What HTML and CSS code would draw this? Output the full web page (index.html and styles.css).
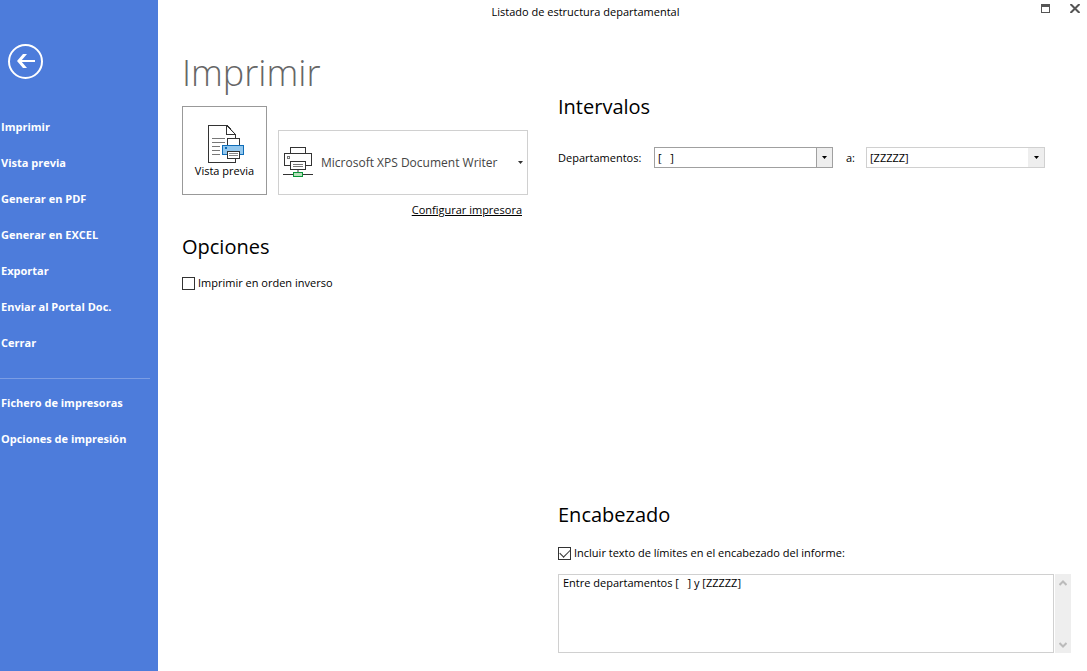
FILE: index.html
```html
<!DOCTYPE html>
<html lang="es">
<head>
<meta charset="utf-8">
<meta name="viewport" content="width=device-width, initial-scale=1">
<title>Listado de estructura departamental</title>
<link rel="stylesheet" href="styles.css">
</head>
<body>
<div class="app">
  <aside class="sidebar">
    <button class="back" type="button" aria-label="Volver">
      <svg width="36" height="36" viewBox="0 0 36 36" fill="none" stroke="#fff">
        <circle cx="17.5" cy="17.5" r="16.5" stroke-width="2"/>
        <path d="M11 17H27" stroke-width="2"/>
        <path d="M9 17L15 10H19L13 17L19 24H15Z" fill="#fff" stroke="none"/>
      </svg>
    </button>
    <nav class="menu">
      <a class="menu-item" href="#imprimir">Imprimir</a>
      <a class="menu-item" href="#vista">Vista previa</a>
      <a class="menu-item" href="#pdf">Generar en PDF</a>
      <a class="menu-item" href="#excel">Generar en EXCEL</a>
      <a class="menu-item" href="#exportar">Exportar</a>
      <a class="menu-item" href="#portal">Enviar al Portal Doc.</a>
      <a class="menu-item" href="#cerrar">Cerrar</a>
    </nav>
    <nav class="menu menu-extra">
      <a class="menu-item" href="#fichero">Fichero de impresoras</a>
      <a class="menu-item" href="#opciones">Opciones de impresión</a>
    </nav>
  </aside>

  <div class="window">
    <header class="titlebar">
      <div class="window-title">Listado de estructura departamental</div>
      <div class="window-controls">
        <button class="window-button" type="button" aria-label="Maximizar">
          <svg width="9" height="9" viewBox="0 0 9 9" shape-rendering="crispEdges"><path d="M0 0H9V9H0ZM1 3V8H8V3Z" fill="#555" fill-rule="evenodd"/></svg>
        </button>
        <button class="window-button" type="button" aria-label="Cerrar ventana">
          <svg width="10" height="9" viewBox="0 0 10 9"><path d="M0.5 0L9.5 9M9.5 0L0.5 9" stroke="#555" stroke-width="2"/></svg>
        </button>
      </div>
    </header>

    <main class="content">
      <div class="column-print">
        <h1 class="page-title">Imprimir</h1>
        <div class="print-row">
          <button class="preview" type="button">
            <svg width="36" height="38" viewBox="0 0 36 38" fill="none" shape-rendering="crispEdges">
              <path d="M.5 .5H19L27.5 9.5V37.5H.5Z" fill="#fff" stroke="#333"/>
              <path d="M18.500 .5V9.5H27.5" stroke="#333"/>
              <path d="M19 .5L27.5 9.5" stroke="#333" shape-rendering="auto"/>
              <path d="M4 13.5H17M4 17.5H17M4 21.5H12M4 25.5H12M4 29.5H12" stroke="#777"/>
              <path d="M19.5 20V13.5H31.5V20" fill="#fff" stroke="#333"/>
              <path d="M14.500 20.500H35.500V29.500H14.500Z" fill="#92c7ee" stroke="#0f6db8"/>
              <path d="M17 22H19V24H17Z" fill="#0f6db8"/>
              <path d="M19.500 26.500H31.500V33.500H19.500Z" fill="#fff" stroke="#333"/>
              <path d="M21 28.500H30M21 30.500H30" stroke="#888"/>
            </svg>
            <span>Vista previa</span>
          </button>
          <div class="printer">
            <svg class="printer-icon" width="30" height="31" viewBox="0 0 30 31" fill="none" shape-rendering="crispEdges">
              <path d="M7.500 7V.500H22.500V7" fill="#fff" stroke="#333"/>
              <path d="M1.500 6.500H28.500V18.500H1.500Z" fill="#fff" stroke="#333"/>
              <path d="M4.500 9.500H6.500V11.500H4.500Z" stroke="#777"/>
              <path d="M7.500 14.500H22.500V22.500H7.500Z" fill="#fff" stroke="#333"/>
              <path d="M10 17.500H20M10 19.500H20" stroke="#777"/>
              <path d="M15 23V25" stroke="#999" stroke-width="2"/>
              <path d="M0 27.500H30" stroke="#333"/>
              <path d="M10.500 25.500H19.500V29.500H10.500Z" fill="#b9e0bd" stroke="#0a9638"/>
            </svg>
            <select class="printer-select" aria-label="Impresora"><option>Microsoft XPS Document Writer</option></select>
            <svg class="printer-arrow" width="5" height="3" viewBox="0 0 5 3"><path d="M0 0H5L2.500 3Z" fill="#333"/></svg>
          </div>
        </div>
        <a class="configure" href="#configurar">Configurar impresora</a>
        <h2 class="section-title">Opciones</h2>
        <label class="check-row"><input class="check" type="checkbox"> Imprimir en orden inverso</label>
      </div>

      <div class="column-range">
        <h2 class="section-title">Intervalos</h2>
        <div class="range">
          <label class="range-label" for="desde">Departamentos:</label>
          <div class="combo combo-active">
            <select class="combo-select" id="desde"><option>[&nbsp;&nbsp;&nbsp;]</option></select>
            <span class="combo-arrow"><svg width="5" height="3" viewBox="0 0 5 3"><path d="M0 0H5L2.500 3Z"/></svg></span>
          </div>
          <label class="range-to" for="hasta">a:</label>
          <div class="combo">
            <select class="combo-select" id="hasta"><option>[ZZZZZ]</option></select>
            <span class="combo-arrow"><svg width="5" height="3" viewBox="0 0 5 3"><path d="M0 0H5L2.500 3Z"/></svg></span>
          </div>
        </div>
        <section class="heading-section">
          <h2 class="section-title">Encabezado</h2>
          <label class="check-row"><input class="check" type="checkbox" checked> Incluir texto de límites en el encabezado del informe:</label>
          <div class="memo">
            <textarea class="memo-text" aria-label="Texto del encabezado">Entre departamentos [&nbsp;&nbsp;&nbsp;] y [ZZZZZ]</textarea>
            <div class="scroll">
              <button class="scroll-button" type="button" aria-label="Subir"><svg width="8" height="6" viewBox="0 0 8 6"><path d="M.5 5L4 1.500L7.500 5" fill="none" stroke="#bbb" stroke-width="2"/></svg></button>
              <button class="scroll-button" type="button" aria-label="Bajar"><svg width="8" height="6" viewBox="0 0 8 6"><path d="M.5 1L4 4.500L7.500 1" fill="none" stroke="#bbb" stroke-width="2"/></svg></button>
            </div>
          </div>
        </section>
      </div>
    </main>
  </div>
</div>
</body>
</html>
```

FILE: styles.css
```css
* { box-sizing: border-box; }

body {
  margin: 0;
  background: #fff;
  color: #000;
  font: 11px/16px "Open Sans", "Noto Sans", sans-serif;
}

button, select, textarea, input { margin: 0; font: inherit; color: inherit; }

button { padding: 0; border: 0; background: none; }

svg { display: block; flex: none; }

.app { display: grid; grid-template-columns: 158px 1fr; min-height: 100vh; }

.sidebar { background: #4d7cdb; color: #fff; padding-top: 44px; }

.back { display: block; margin-left: 8px; }

.menu { display: flex; flex-direction: column; margin-top: 29px; }

.menu-item {
  padding-left: 1px;
  font-weight: 700;
  line-height: 36px;
  color: #fff;
  text-decoration: none;
}

.menu-extra {
  margin: 17px 8px 0 0;
  padding-top: 6px;
  border-top: 1px solid #7b9de4;
}

.window { display: flex; flex-direction: column; }

.titlebar { display: flex; height: 24px; }

.window-title { flex: 1; padding-top: 4px; text-align: center; }

.window-controls {
  display: flex;
  gap: 20px;
  width: 74px;
  padding: 4px 7px 0 0;
  justify-content: flex-end;
  align-items: flex-start;
}

.content {
  flex: 1;
  display: grid;
  grid-template-columns: 346px 1fr;
  gap: 30px;
  padding: 0 16px 18px 24px;
}

.column-print { display: flex; flex-direction: column; padding-top: 25px; }

.page-title {
  margin: 0;
  font-size: 36px;
  font-weight: 300;
  line-height: 48px;
  color: #666;
}

.print-row { display: flex; gap: 11px; margin-top: 9px; align-items: flex-end; }

.preview {
  display: flex;
  flex-direction: column;
  align-items: center;
  width: 85px;
  height: 89px;
  padding-bottom: 15px;
  justify-content: flex-end;
  border: 1px solid #999;
}

.preview svg { margin-left: 2px; }

.printer {
  flex: 1;
  display: flex;
  align-items: center;
  height: 65px;
  padding: 0 4px;
  border: 1px solid #d0d0d0;
}

.printer-select {
  flex: 1;
  min-width: 0;
  padding: 0 0 0 8px;
  border: 0;
  background: none;
  appearance: none;
  font-size: 12px;
  color: #444;
}

.configure { align-self: flex-end; margin: 7px 6px 0 0; color: #000; }

.section-title { margin: 0; font-size: 20px; font-weight: 400; line-height: 28px; }

.column-print .section-title { margin-top: 15px; }

.check-row { display: flex; align-items: center; gap: 3px; margin-top: 14px; }

.check {
  display: grid;
  place-items: center;
  width: 13px;
  height: 13px;
  border: 1px solid #333;
  background: #fff;
  appearance: none;
}

.check:checked::before {
  content: "";
  width: 9px;
  height: 5px;
  margin-bottom: 3px;
  border: solid #333;
  border-width: 0 0 1px 1px;
  transform: rotate(-45deg);
}

.column-range { display: flex; flex-direction: column; padding-top: 69px; }

.range {
  display: grid;
  grid-template-columns: 96px 179px 33px 179px;
  align-items: center;
  margin-top: 26px;
}

.range-to { padding-left: 13px; }

.combo { display: flex; height: 21px; border: 1px solid #d0d0d0; }

.combo-select {
  flex: 1;
  min-width: 0;
  padding: 0 3px;
  border: 0;
  background: none;
  appearance: none;
}

.combo-arrow {
  display: flex;
  align-items: center;
  justify-content: center;
  width: 16px;
  background: #eee;
}

.combo-active { border-color: #a0a0a0; }

.combo-active .combo-arrow { border-left: 1px solid #a0a0a0; }

.heading-section { margin-top: auto; }

.heading-section .check-row { margin-top: 16px; }

.memo { display: flex; gap: 1px; height: 79px; margin-top: 13px; }

.memo-text {
  flex: 1;
  min-width: 0;
  padding: 0 4px;
  border: 1px solid #d0d0d0;
  resize: none;
}

.scroll {
  display: flex;
  flex-direction: column;
  justify-content: space-between;
  align-items: center;
  width: 16px;
  padding: 6px 0 5px;
  background: #eee;
}
```
